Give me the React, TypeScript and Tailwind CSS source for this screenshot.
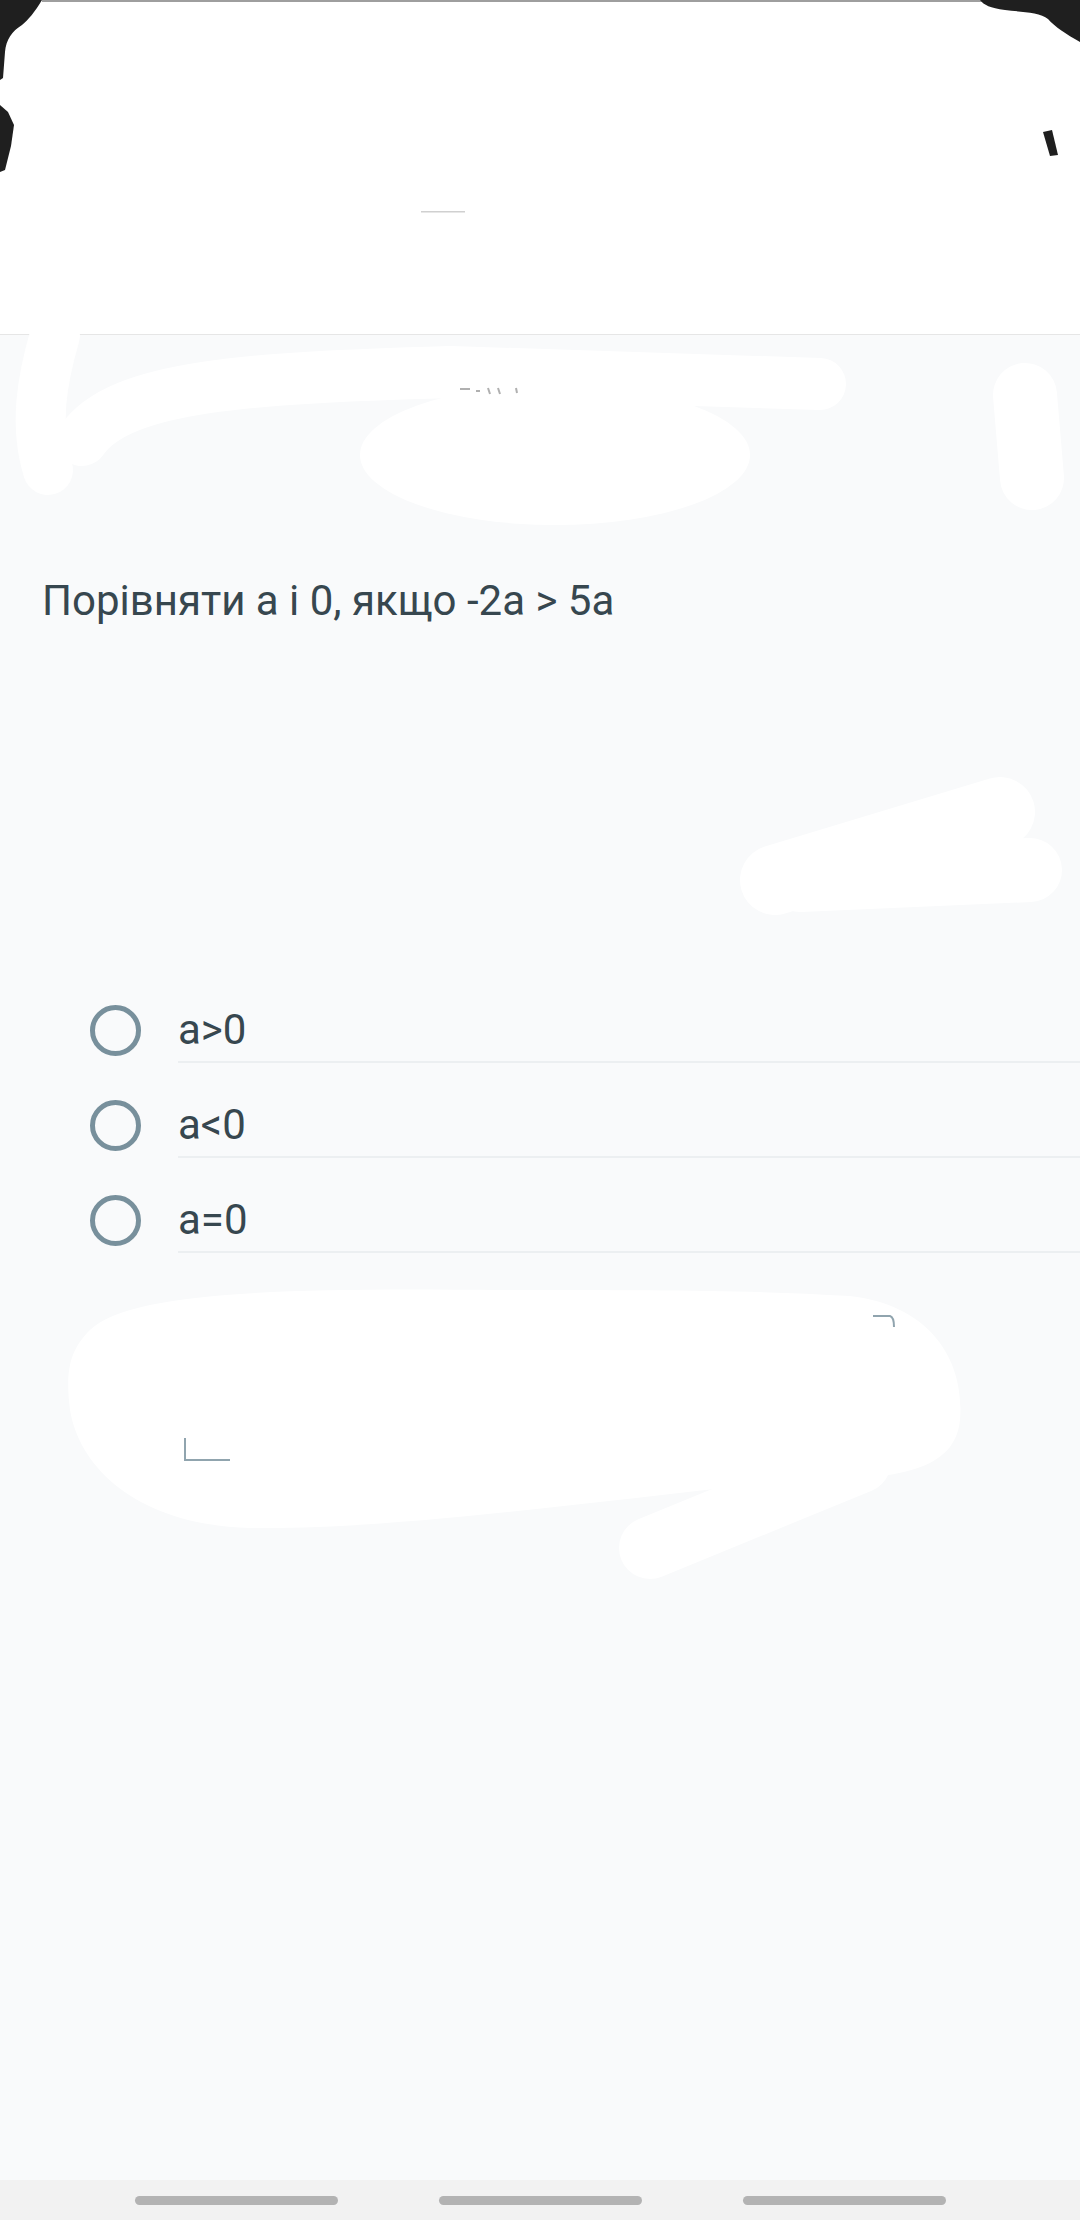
import React from "react";

const options = ["a>0", "a<0", "a=0"];

function Scribbles() {
  return (
    <svg
      className="pointer-events-none absolute left-0 top-0"
      width="1080"
      height="2220"
      viewBox="0 0 1080 2220"
    >
      {/* top status strip remnants */}
      <rect x="42" y="0" width="940" height="2" fill="#9e9e9e" />
      <path d="M0,0 L42,0 C35,12 28,20 22,25 C12,31 6,40 5,52 L3,78 L0,80 Z" fill="#1f1f1f" />
      <path d="M0,105 L8,112 L14,125 L11,146 L5,170 L0,172 Z" fill="#1f1f1f" />
      <path d="M980,0 L1080,0 L1080,42 C1066,34 1055,27 1048,19 C1040,12 1020,12 1005,10 C990,8 984,5 980,0 Z" fill="#1f1f1f" />
      <path d="M1043,132 L1052,130 L1058,155 L1050,156 Z" fill="#1f1f1f" />
      {/* hidden fragments */}
      <rect x="421" y="211" width="44" height="1.5" fill="#d0d0d0" />
      {/* white scribbles */}
      <g stroke="#ffffff" strokeLinecap="round" strokeLinejoin="round" fill="none">
        <path d="M55,335 C42,380 34,425 48,470" strokeWidth="50" />
        <path d="M82,440 C120,385 250,378 450,372 L820,384" strokeWidth="52" />
        <path d="M1025,395 L1032,478" strokeWidth="64" />
        <path d="M775,880 L1000,812" strokeWidth="70" />
        <path d="M800,880 L1030,870" strokeWidth="64" />
        <path d="M650,1548 L860,1462" strokeWidth="62" />
      </g>
      <ellipse cx="555" cy="455" rx="195" ry="70" fill="#ffffff" />
      <path
        d="M90,1330 C130,1290 300,1288 500,1290 C650,1290 750,1290 850,1296 C930,1305 965,1360 960,1420 C955,1470 900,1480 800,1480 C600,1500 400,1530 250,1528 C140,1525 80,1470 70,1410 C65,1370 70,1350 90,1330 Z"
        fill="#ffffff"
      />
      <path d="M460,389 L470,389 M476,391 L480,391 M488,388 L490,394 M498,388 L500,394 M516,388 L517,393" stroke="#b0b0b0" strokeWidth="2" />
      <path d="M185,1438 L185,1460 L230,1460" stroke="#90a4ae" strokeWidth="2" fill="none" />
      <path d="M873,1316 L890,1316 Q894,1317 894,1327" stroke="#90a4ae" strokeWidth="2" fill="none" />
    </svg>
  );
}

export default function App() {
  return (
    <div
      className="relative flex h-[2220px] w-[1080px] flex-col overflow-hidden bg-[#f9fafb]"
      style={{ fontFamily: "Roboto, 'Noto Sans', sans-serif" }}
    >
      <header className="h-[335px] shrink-0 border-b border-[#e6e6e6] bg-white" />
      <main className="flex flex-1 flex-col bg-[#f9fafb]">
        <p className="ml-[42px] mt-[242px] text-[42px] leading-[48px] text-[#37474f]">
          Порівняти а і 0, якщо -2а &gt; 5а
        </p>
        <div className="mt-[343px] flex flex-col">
          {options.map((o) => (
            <div key={o} className="flex h-[95px] items-start pl-[90px]">
              <div className="mt-[37px] h-[51px] w-[51px] shrink-0 rounded-full border-[5px] border-[#78909c]" />
              <div className="ml-[37px] flex h-[95px] flex-1 items-start border-b-2 border-[#eceff1] pt-[38px]">
                <span className="text-[42px] leading-[48px] text-[#37474f]">{o}</span>
              </div>
            </div>
          ))}
        </div>
      </main>
      <nav className="flex h-[40px] shrink-0 items-center justify-center gap-[101px] bg-[#f2f2f2]">
        <div className="h-[9px] w-[203px] rounded-full bg-[#b3b3b3]" />
        <div className="h-[9px] w-[203px] rounded-full bg-[#b3b3b3]" />
        <div className="h-[9px] w-[203px] rounded-full bg-[#b3b3b3]" />
      </nav>
      <Scribbles />
    </div>
  );
}
